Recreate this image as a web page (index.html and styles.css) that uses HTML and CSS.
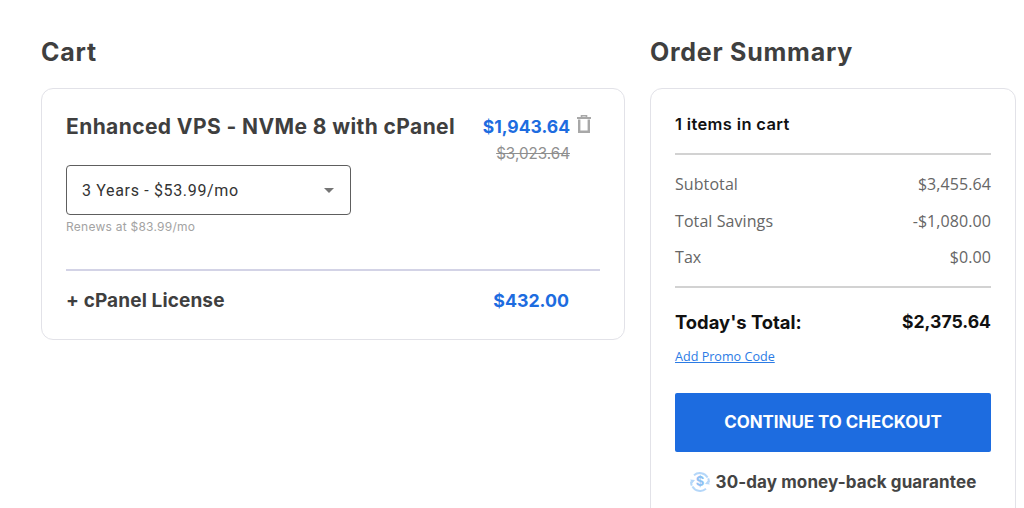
FILE: index.html
```html
<!DOCTYPE html>
<html lang="en">
<head>
<meta charset="utf-8">
<title>Cart</title>
<link rel="stylesheet" href="styles.css">
</head>
<body>
<main class="page">
  <section class="cart">
    <h1 class="heading">Cart</h1>
    <div class="card cart-card">
      <div class="product">
        <div class="product-left">
          <h2 class="product-name">Enhanced VPS - NVMe 8 with cPanel</h2>
          <div class="select">
            <span>3 Years - $53.99/mo</span>
            <span class="caret"></span>
          </div>
          <p class="renews">Renews at $83.99/mo</p>
        </div>
        <div class="product-price">
          <div class="price-line">
            <span class="price">$1,943.64</span>
            <svg class="trash" viewBox="0 0 14 18" width="14" height="18" aria-hidden="true">
              <path d="M0 3h14" fill="none" stroke="#a8a8a8" stroke-width="2"/>
              <path d="M4.5 2.5V.8h5v1.7" fill="none" stroke="#a8a8a8" stroke-width="1.6"/>
              <path d="M2.2 4.5V16.8h9.6V4.5" fill="none" stroke="#a8a8a8" stroke-width="2.4"/>
            </svg>
          </div>
          <s class="old-price">$3,023.64</s>
        </div>
      </div>
      <div class="addon">
        <span class="addon-name">+ cPanel License</span>
        <span class="addon-price">$432.00</span>
      </div>
    </div>
  </section>
  <aside class="summary">
    <h1 class="heading">Order Summary</h1>
    <div class="card summary-card">
      <div class="count">1 items in cart</div>
      <div class="rows">
        <div class="row"><span>Subtotal</span><span>$3,455.64</span></div>
        <div class="row"><span>Total Savings</span><span>-$1,080.00</span></div>
        <div class="row"><span>Tax</span><span>$0.00</span></div>
      </div>
      <div class="total"><span class="total-label">Today's Total:</span><span class="total-value">$2,375.64</span></div>
      <a class="promo" href="#">Add Promo Code</a>
      <button class="checkout" type="button">CONTINUE TO CHECKOUT</button>
      <div class="guarantee">
        <svg viewBox="0 0 20 20" width="20" height="20" aria-hidden="true">
          <path d="M17.6 5.5A9 9 0 0 0 4 3.2M2.4 14.5A9 9 0 0 0 16 16.8" fill="none" stroke="#b5d7f9" stroke-width="2"/>
          <path d="M18.9 10.5a9 9 0 0 0-.7-4.2M1.1 9.5a9 9 0 0 0 .7 4.2" fill="none" stroke="#b5d7f9" stroke-width="2"/>
          <path d="M.2 7.5l2 4 2.8-3.4zM19.8 12.5l-2-4-2.8 3.4z" fill="#b5d7f9"/>
          <text class="dollar" x="10" y="14.3">$</text>
        </svg>
        <span>30-day money-back guarantee</span>
      </div>
    </div>
  </aside>
</main>
</body>
</html>
```

FILE: styles.css
```css
* { box-sizing: border-box; }
html, body { margin: 0; height: 508px; overflow: hidden; background: #fff; }
body { font-family: "Inter", "Liberation Sans", sans-serif; color: #3f3f3f; }
.page { display: flex; gap: 25px; padding: 37px 0 0 41px; height: 508px; overflow: hidden; align-items: flex-start; }
.cart { width: 584px; flex: none; }
.summary { width: 366px; flex: none; }
.heading { margin: 0 0 20px; font-size: 25px; line-height: 31px; font-weight: 700; letter-spacing: .75px; color: #3f3f3f; }
.card { background: #fff; border: 1px solid #e2e2e8; border-radius: 12px; }
.cart-card { padding: 24px 24px 0; height: 252px; }
.product { display: flex; justify-content: space-between; height: 158px; border-bottom: 2px solid #d3d3e6; }
.product-name { margin: 0; font-size: 21px; line-height: 27px; font-weight: 700; color: #3f3f3f; letter-spacing: .4px; white-space: nowrap; }
.select { margin-top: 25px; width: 285px; height: 50px; border: 1px solid #5e5e5e; border-radius: 4px; padding: 0 16px 0 15px; display: flex; align-items: center; justify-content: space-between; font-family: "Roboto", sans-serif; font-size: 16px; letter-spacing: .66px; color: #333; }
.caret { width: 0; height: 0; border-left: 5px solid transparent; border-right: 5px solid transparent; border-top: 5px solid #757575; }
.renews { margin: 4px 0 0; font-size: 12px; line-height: 16px; color: #a3a3a3; letter-spacing: .25px; }
.product-price { display: flex; flex-direction: column; align-items: flex-end; }
.price-line { display: flex; align-items: center; gap: 7px; height: 27px; margin-right: 9px; }
.price { font-size: 17.5px; font-weight: 700; color: #1d6ce0; }
.trash { display: block; margin-top: -5px; }
.old-price { margin: 4px 30px 0 0; font-size: 15.2px; line-height: 20px; color: #8f8f8f; }
.addon { display: flex; justify-content: space-between; align-items: center; padding: 0 31px 0 0; height: 58px; }
.addon-name { font-size: 19px; font-weight: 700; letter-spacing: .12px; color: #3f3f3f; }
.addon-price { font-size: 17.8px; font-weight: 700; color: #1d6ce0; }
.summary-card { padding: 0 24px; height: 440px; }
.count { height: 66px; border-bottom: 2px solid #d2d2d2; display: flex; align-items: center; font-size: 16.5px; font-weight: 600; letter-spacing: .35px; color: #111; padding-top: 6px; }
.rows { padding: 11px 0 10px; border-bottom: 2px solid #d2d2d2; font-family: "Open Sans", sans-serif; font-size: 16px; letter-spacing: .08px; color: #666; }
.row { display: flex; justify-content: space-between; align-items: center; height: 36.5px; }
.total { display: flex; justify-content: space-between; align-items: center; margin-top: 16px; height: 36px; font-weight: 700; color: #111; }
.total-label { font-size: 18.4px; }
.total-value { font-size: 17.6px; }
.promo { display: block; margin-top: 8px; font-family: "Open Sans", sans-serif; font-size: 12.6px; line-height: 18px; color: #2b7be5; }
.checkout { display: block; width: 100%; height: 59px; margin-top: 27px; border: 0; border-radius: 2px; background: #1d6ce0; color: #fff; font-family: inherit; font-size: 16.9px; font-weight: 700; }
.guarantee { display: flex; align-items: center; justify-content: center; gap: 6px; margin-top: 20px; font-size: 17px; letter-spacing: .1px; font-weight: 700; color: #444; white-space: nowrap; }
.guarantee svg { flex: none; }
.dollar { font-family: "Inter", sans-serif; font-size: 13px; font-weight: 700; text-anchor: middle; fill: #8fc1f3; }
```
